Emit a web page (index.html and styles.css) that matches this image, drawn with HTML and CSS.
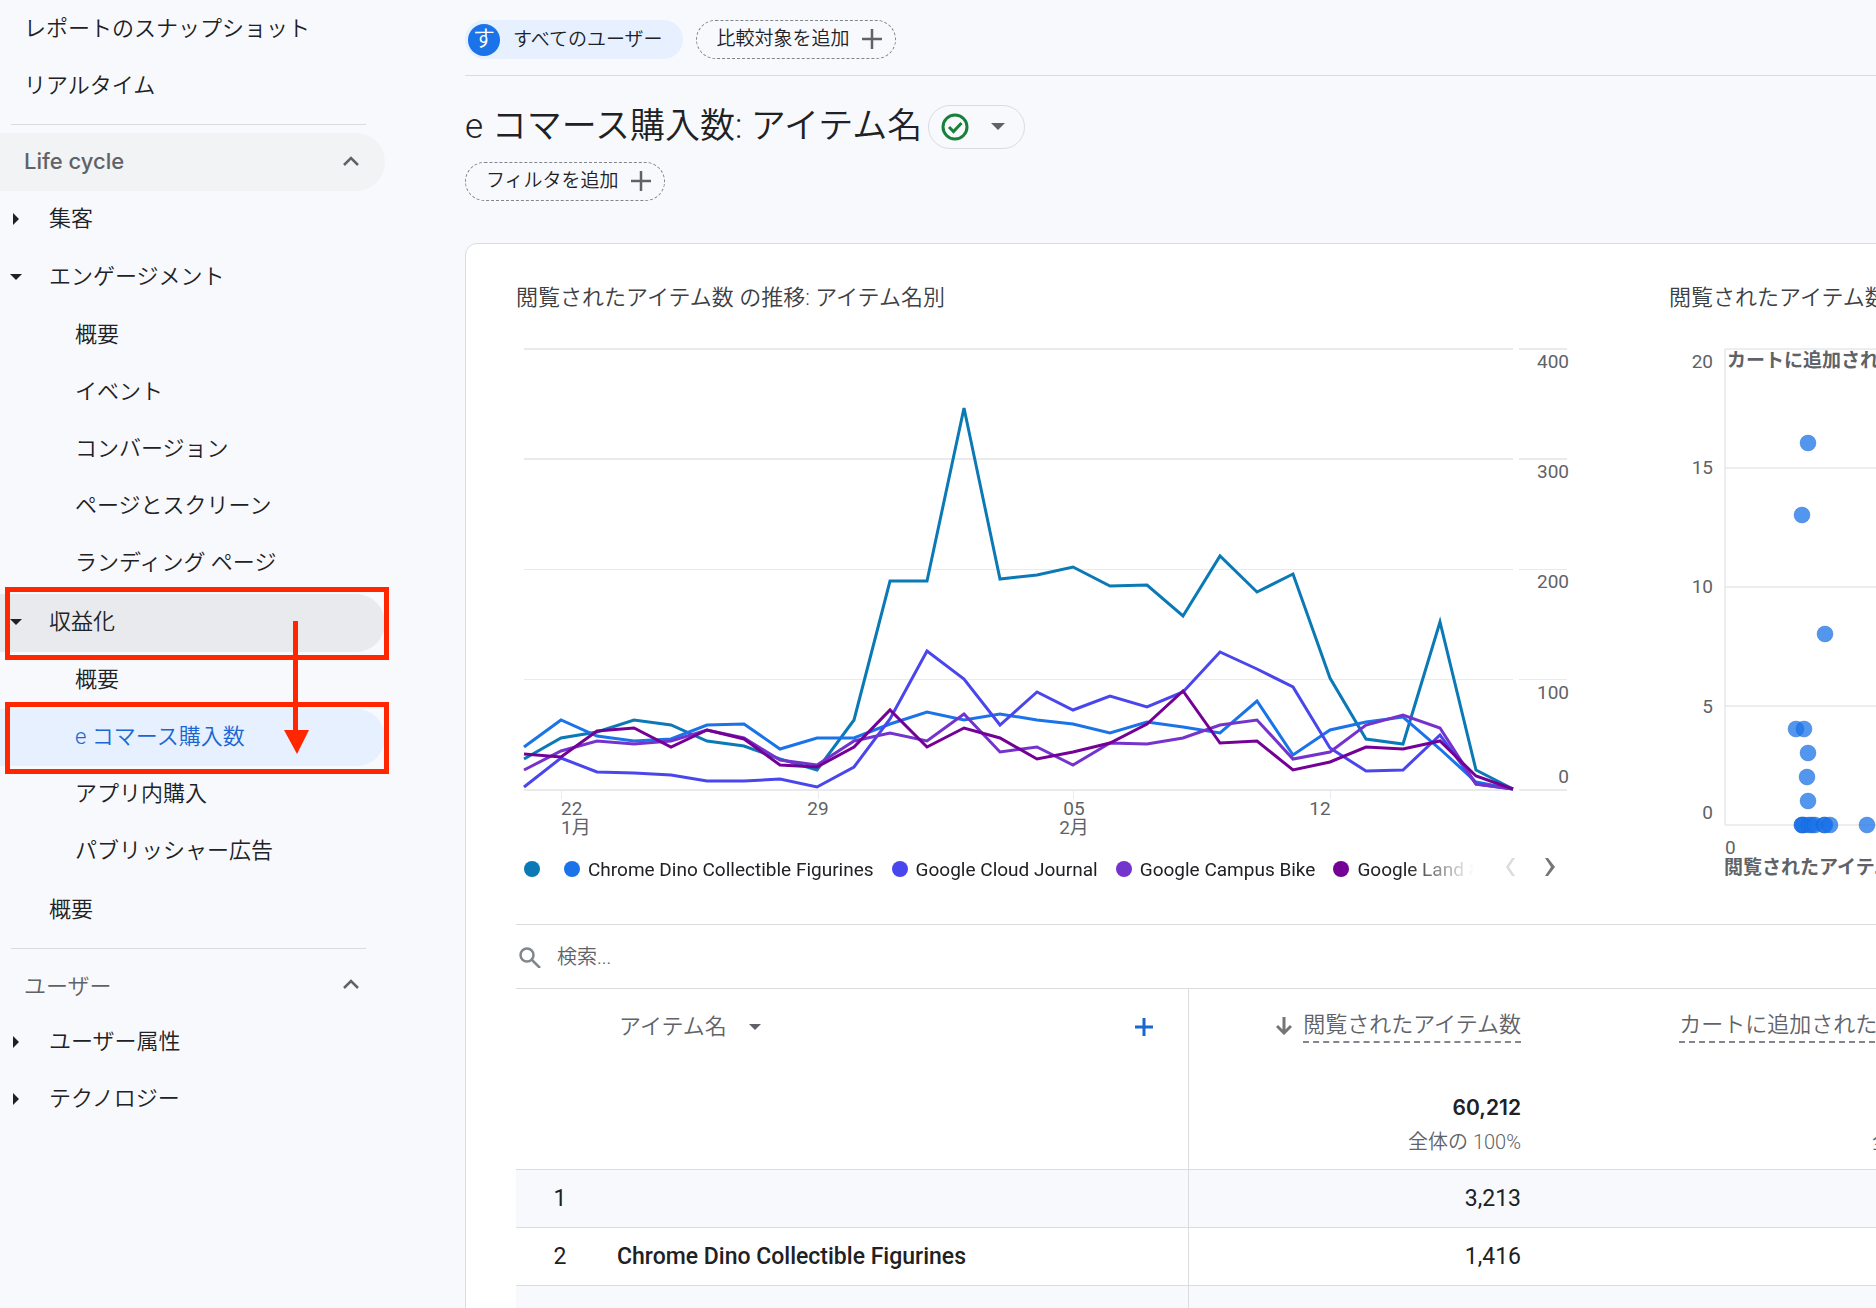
FILE: index.html
```html
<!DOCTYPE html>
<html lang="ja">
<head>
<meta charset="utf-8">
<meta name="viewport" content="width=device-width, initial-scale=1">
<title>e コマース購入数: アイテム名</title>
<link rel="stylesheet" href="styles.css">
</head>
<body>
<div class="app">
  <nav class="sidebar" aria-label="レポート">
    <ul class="menu menu-flat">
      <li><a class="row row-section" href="#snapshot">レポートのスナップショット</a></li>
      <li><a class="row row-section" href="#realtime">リアルタイム</a></li>
    </ul>
    <hr class="rule">
    <ul class="menu menu-tall">
      <li><button class="row row-section row-heading row-hover" type="button" aria-expanded="true"><span class="brand">Life cycle</span>
        <svg class="chevron" width="16" height="10" viewBox="0 0 16 10"><path d="M1 9 8 2l7 7" fill="none" stroke="currentColor" stroke-width="2.5"/></svg></button></li>
      <li><a class="row row-group" href="#acquisition"><svg class="caret" width="12" height="12" viewBox="0 0 12 12"><path d="M3 0v12l6-6z"/></svg>集客</a></li>
      <li><a class="row row-group" href="#engagement"><svg class="caret" width="12" height="12" viewBox="0 0 12 12"><path d="M0 3h12L6 9z"/></svg>エンゲージメント</a>
        <ul class="menu submenu">
          <li><a class="row row-page" href="#engagement-overview">概要</a></li>
          <li><a class="row row-page" href="#events">イベント</a></li>
          <li><a class="row row-page" href="#conversions">コンバージョン</a></li>
          <li><a class="row row-page" href="#pages">ページとスクリーン</a></li>
          <li><a class="row row-page" href="#landing">ランディング ページ</a></li>
        </ul>
      </li>
      <li><a class="row row-group row-open marked" href="#monetization"><svg class="caret" width="12" height="12" viewBox="0 0 12 12"><path d="M0 3h12L6 9z"/></svg>収益化
          <svg class="arrow" width="26" height="134" viewBox="0 0 26 134"><path d="M9 0h5v109h11L13 133 0 109h9z" fill="#ff2600"/></svg></a>
        <ul class="menu submenu">
          <li><a class="row row-page" href="#monetization-overview">概要</a></li>
          <li><a class="row row-page row-current marked" href="#ecommerce" aria-current="page">e コマース購入数</a></li>
          <li><a class="row row-page" href="#in-app">アプリ内購入</a></li>
          <li><a class="row row-page" href="#publisher">パブリッシャー広告</a></li>
        </ul>
      </li>
      <li><a class="row row-group" href="#overview">概要</a></li>
    </ul>
    <hr class="rule">
    <ul class="menu">
      <li><button class="row row-section row-heading" type="button" aria-expanded="true"><span>ユーザー</span>
        <svg class="chevron" width="16" height="10" viewBox="0 0 16 10"><path d="M1 9 8 2l7 7" fill="none" stroke="currentColor" stroke-width="2.5"/></svg></button></li>
      <li><a class="row row-group" href="#attributes"><svg class="caret" width="12" height="12" viewBox="0 0 12 12"><path d="M3 0v12l6-6z"/></svg>ユーザー属性</a></li>
      <li><a class="row row-group" href="#tech"><svg class="caret" width="12" height="12" viewBox="0 0 12 12"><path d="M3 0v12l6-6z"/></svg>テクノロジー</a></li>
    </ul>
  </nav>

  <main class="main">
    <div class="toolbar">
      <button class="chip chip-filled" type="button"><span class="avatar">す</span>すべてのユーザー</button>
      <button class="chip chip-dashed" type="button">比較対象を追加
        <svg width="20" height="20" viewBox="0 0 20 20"><path d="M10 0v20M0 10h20" stroke="#5f6368" stroke-width="2.5"/></svg></button>
    </div>
    <div class="heading">
      <h1>e コマース購入数: アイテム名</h1>
      <button class="status" type="button" aria-label="データ品質">
        <svg width="28" height="28" viewBox="0 0 28 28" fill="none" stroke="#188038" stroke-width="3"><circle cx="14" cy="14" r="12"/><path d="m8 14 4.500 4.500L20.500 10"/></svg>
        <svg width="14" height="8" viewBox="0 0 14 8"><path d="M0 0h14L7 7z" fill="#5f6368"/></svg>
      </button>
    </div>
    <button class="chip chip-dashed chip-filter" type="button">フィルタを追加
      <svg width="20" height="20" viewBox="0 0 20 20"><path d="M10 0v20M0 10h20" stroke="#5f6368" stroke-width="2.5"/></svg></button>

    <section class="card">
      <div class="charts">
        <section>
          <h2>閲覧されたアイテム数 の推移: アイテム名別</h2>
          <svg class="chart" width="1056" height="500" viewBox="0 0 1056 500">
            <g transform="translate(8 10)">
              <path class="grid" d="M0 0H989M995 0h48M0 110H989M995 110h48M0 441H989M995 441h48"/>
              <path class="grid thin" d="M0 220.500H989M995 220.500h48M0 330.500H989M995 330.500h48M37.500 441v9M294.500 441v9M549.500 441v9M806.500 441v9"/>
              <g class="lines">
                <polyline stroke="#0b79b5" points="0,410 37,389 73,383 110,371 147,376 183,392 220,397 256,410 293,421 330,371 366,232 403,232 440,59 476,230 513,226 549,218 586,237 623,236 659,267 696,207 733,243 769,225 806,329 842,390 879,395 916,273 952,421 989,440"/>
                <polyline stroke="#1a73e8" points="0,398 37,371 73,387 110,392 147,390 183,376 220,375 256,400 293,389 330,389 366,375 403,363 440,371 476,365 513,371 549,375 586,384 623,373 659,378 696,384 733,352 769,406 806,381 842,373 879,368 916,400 952,433 989,440"/>
                <polyline stroke="#4a46ed" points="0,438 37,409 73,423 110,424 147,426 183,432 220,432 256,430 293,438 330,418 366,370 403,302 440,330 476,376 513,343 549,361 586,347 623,358 659,343 696,303 733,320 769,338 806,399 842,422 879,421 916,386 952,435 989,440"/>
                <polyline stroke="#7433cc" points="0,421 37,402 73,392 110,395 147,392 183,381 220,389 256,411 293,416 330,392 366,384 403,392 440,365 476,403 513,398 549,416 586,394 623,395 659,389 696,376 733,371 769,410 806,403 842,376 879,366 916,379 952,435 989,440"/>
                <polyline stroke="#740096" points="0,405 37,408 73,382 110,379 147,398 183,381 220,390 256,416 293,418 330,398 366,361 403,398 440,379 476,389 513,410 549,403 586,394 623,375 659,342 696,394 733,392 769,421 806,413 842,398 879,400 916,392 952,427 989,440"/>
              </g>
              <g class="tick" text-anchor="end">
                <text x="1045" y="19">400</text><text x="1045" y="129">300</text><text x="1045" y="239">200</text><text x="1045" y="350">100</text><text x="1045" y="434">0</text>
              </g>
              <g class="tick">
                <text x="37" y="466">22</text><text x="37" y="485">1月</text>
                <text x="294" y="466" text-anchor="middle">29</text>
                <text x="550" y="466" text-anchor="middle">05</text><text x="550" y="485" text-anchor="middle">2月</text>
                <text x="796" y="466" text-anchor="middle">12</text>
              </g>
            </g>
          </svg>
          <div class="legend">
            <ul class="legend-items">
              <li><i class="dot teal"></i></li>
              <li><i class="dot blue"></i>Chrome Dino Collectible Figurines</li>
              <li><i class="dot indigo"></i>Google Cloud Journal</li>
              <li><i class="dot purple"></i>Google Campus Bike</li>
              <li><i class="dot plum"></i>Google Land &amp; Sea</li>
            </ul>
            <button class="pager" type="button" aria-label="前へ" disabled><svg width="12" height="20" viewBox="0 0 12 20"><path d="M8 1h3L5 10l6 9H8L2 10z"/></svg></button>
            <button class="pager" type="button" aria-label="次へ"><svg width="12" height="20" viewBox="0 0 12 20"><path d="M1 1h3l7 9-7 9H1l6-9z"/></svg></button>
          </div>
        </section>
        <section>
          <h2>閲覧されたアイテム数</h2>
          <svg class="chart" width="440" height="545" viewBox="0 0 440 545">
            <g transform="translate(56 10)">
              <path class="axis" d="M384 0H0V476H384M0 119h384M0 238h384M0 357h384"/>
              <g class="points">
                <circle cx="83" cy="94" r="8"/><circle cx="77" cy="166" r="8"/><circle cx="100" cy="285" r="8"/>
                <circle cx="71" cy="380" r="8"/><circle cx="79" cy="380" r="8"/><circle cx="83" cy="404" r="8"/>
                <circle cx="82" cy="428" r="8"/><circle cx="83" cy="452" r="8"/>
                <circle cx="77" cy="476" r="8"/><circle cx="77" cy="476" r="8"/><circle cx="79" cy="476" r="8"/>
                <circle cx="84" cy="476" r="8"/><circle cx="87" cy="476" r="8"/><circle cx="90" cy="476" r="8"/>
                <circle cx="99" cy="476" r="8"/><circle cx="100" cy="476" r="8"/><circle cx="105" cy="476" r="8"/>
                <circle cx="142" cy="476" r="8"/>
              </g>
              <g class="tick" text-anchor="end">
                <text x="-12" y="19">20</text><text x="-12" y="125">15</text><text x="-12" y="244">10</text><text x="-12" y="364">5</text><text x="-12" y="470">0</text>
              </g>
              <g class="tick">
                <text x="0" y="505">0</text>
                <text class="strong" x="2" y="18">カートに追加されたアイテム数</text>
                <text class="strong" x="-1" y="525">閲覧されたアイテム数</text>
              </g>
            </g>
          </svg>
        </section>
      </div>

      <label class="search">
        <svg width="22" height="22" viewBox="0 0 22 22" fill="none" stroke="#80868b" stroke-width="2.500"><circle cx="8" cy="9" r="6.500"/><path d="m13 14 8 8"/></svg>
        <input type="search" placeholder="検索..." aria-label="検索">
      </label>

      <table class="data">
        <colgroup><col class="c-index"><col class="c-name"><col class="c-views"><col class="c-cart"></colgroup>
        <thead>
          <tr class="labels">
            <th class="edge" colspan="2" scope="col">
              <div class="dimension">
                <button class="plain dimension-name" type="button">アイテム名<svg width="12" height="6" viewBox="0 0 12 6"><path d="M0 0h12L6 6z" fill="#5f6368"/></svg></button>
                <button class="plain" type="button" aria-label="ディメンションを追加"><svg width="18" height="18" viewBox="0 0 18 18"><path d="M9 0v18M0 9h18" stroke="#1967d2" stroke-width="3"/></svg></button>
              </div>
            </th>
            <th class="metric" scope="col"><button class="plain" type="button"><svg class="sort" width="16" height="18" viewBox="0 0 16 18"><path d="M8 0v16M1 9l7 7 7-7" fill="none" stroke="#757575" stroke-width="3"/></svg><span class="term">閲覧されたアイテム数</span></button></th>
            <th class="metric" scope="col"><button class="plain" type="button"><span class="term">カートに追加されたアイテム数</span></button></th>
          </tr>
          <tr class="totals">
            <td class="edge" colspan="2"></td>
            <td><strong>60,212</strong><small>全体の 100%</small></td>
            <td><strong></strong><small>全体の 100%</small></td>
          </tr>
        </thead>
        <tbody>
          <tr><td class="index">1</td><th class="edge" scope="row"></th><td>3,213</td><td></td></tr>
          <tr><td class="index">2</td><th class="edge" scope="row">Chrome Dino Collectible Figurines</th><td>1,416</td><td></td></tr>
          <tr><td class="index"></td><th class="edge" scope="row"></th><td></td><td></td></tr>
        </tbody>
      </table>
    </section>
  </main>
</div>
</body>
</html>
```

FILE: styles.css
```css
* { box-sizing: border-box; }

body {
  margin: 0;
  background: #f8f9fc;
  color: #202124;
  font-family: Roboto, "Noto Sans CJK JP", sans-serif;
  font-size: 22px;
}

button, input { font: inherit; color: inherit; }
h1, h2 { margin: 0; font-weight: 350; }
svg { flex: none; display: block; }

.app {
  display: flex;
  height: 100vh;
  overflow: hidden;
}

/* Sidebar */
.sidebar { flex: 0 0 465px; padding-right: 80px; font-weight: 350; }
.menu { list-style: none; margin: 0; padding: 0; }
.menu-flat, .submenu { padding-bottom: 2px; }

.row {
  position: relative;
  display: flex;
  align-items: center;
  width: 100%;
  height: 57px;
  padding: 0 26px 6px 24px;
  border: 0;
  border-radius: 0 29px 29px 0;
  background: none;
  color: #202124;
  text-align: left;
  text-decoration: none;
}
.menu-tall > li > .row { height: 58px; }
.row-heading { justify-content: space-between; padding-bottom: 4px; color: #5f6368; }
.row-hover { padding-bottom: 2px; background: #f1f3f4; }
.row-group { padding-left: 49px; padding-bottom: 8px; }
.row-page { padding-left: 75px; padding-bottom: 8px; }
.row-open { background: #e8eaed; }
.row-current { background: #e6f0ff; color: #1967d2; }
.brand { font-family: Inter, sans-serif; font-size: 22px; font-weight: 500; }
.caret { position: absolute; left: 10px; top: 22px; fill: #202124; }

.marked::after {
  content: "";
  position: absolute;
  inset: -7px -4px -8px 5px;
  border: 5px solid #ff2600;
}
.arrow { position: absolute; left: 284px; top: 27px; z-index: 1; }
.row-open { z-index: 2; }

.rule {
  height: 1px;
  margin: 8px 19px 8px 11px;
  border: 0;
  background: #dadce0;
}

/* Report header */
.main { flex: 1 0 1560px; }
.toolbar {
  display: flex;
  gap: 13px;
  padding: 20px 0 16px;
  border-bottom: 1px solid #dadce0;
}
.chip {
  display: flex;
  align-items: center;
  height: 39px;
  border-radius: 20px;
  font-size: 19px;
  font-weight: 350;
  line-height: 34px;
}
.chip-filled {
  gap: 13px;
  padding: 0 20px 0 3px;
  border: 0;
  background: #e6f0ff;
}
.chip-dashed {
  gap: 12px;
  padding: 0 13px 2px 20px;
  border: 1px dashed #80868b;
  background: none;
}
.avatar {
  width: 32px;
  height: 32px;
  border-radius: 50%;
  background: #1a73e8;
  color: #fff;
  font-size: 22px;
  line-height: 30px;
  text-align: center;
}
.heading {
  display: flex;
  align-items: center;
  gap: 6px;
  padding-top: 29px;
}
h1 { font-size: 35px; line-height: 44px; }
.status {
  display: flex;
  align-items: center;
  gap: 22px;
  height: 44px;
  padding: 0 19px 0 12px;
  border: 1px solid #dadce0;
  border-radius: 22px;
  background: none;
}
.chip-filter { margin: 13px 0 42px; }

/* Card */
.card {
  min-height: 1100px;
  padding: 36px 0 0 50px;
  border: 1px solid #dadce0;
  border-radius: 12px;
  background: #fff;
}
.charts {
  display: grid;
  grid-template-columns: 1056px 440px;
  gap: 97px;
  height: 645px;
  border-bottom: 1px solid #dadce0;
}
h2 { margin-bottom: 23px; color: #3c4043; font-size: 22px; line-height: 36px; }
.chart { margin-bottom: 15px; }
.grid { fill: none; stroke: #e8eaed; stroke-width: 2; }
.thin { stroke-width: 1; }
.axis { fill: none; stroke: #dadce0; stroke-width: 1; }
.lines { fill: none; stroke-width: 3; }
.points { fill: #1a73e8; fill-opacity: .75; stroke: #185abc; stroke-opacity: .3; }
.tick { fill: #5f6368; font-size: 19px; }
.strong { font-weight: 700; }

.legend {
  display: flex;
  align-items: center;
  gap: 28px;
  height: 30px;
  font-size: 19px;
}
.legend-items {
  display: flex;
  flex: 0 0 960px;
  gap: 18px;
  margin: 0;
  padding: 0 0 0 8px;
  overflow: hidden;
  list-style: none;
  white-space: nowrap;
  -webkit-mask-image: linear-gradient(90deg, #000 890px, transparent 958px);
  mask-image: linear-gradient(90deg, #000 890px, transparent 958px);
}
.legend-items li { display: flex; align-items: center; gap: 8px; }
.legend-items li:first-child { padding-right: 6px; }
.dot { width: 16px; height: 16px; border-radius: 50%; }
.teal { background: #0b79b5; }
.blue { background: #1a73e8; }
.indigo { background: #4a46ed; }
.purple { background: #7433cc; }
.plum { background: #740096; }
.pager { width: 12px; padding: 0 0 4px; border: 0; background: none; fill: #757575; }
.pager:disabled { fill: #dadce0; }

.search {
  display: flex;
  align-items: center;
  gap: 14px;
  height: 64px;
  padding-left: 3px;
  border-bottom: 1px solid #dadce0;
}
.search input {
  flex: 1;
  border: 0;
  outline: 0;
  background: none;
  font-size: 20px;
  font-weight: 350;
}
.search input::placeholder { color: #5f6368; opacity: 1; }

/* Table */
.data { width: 1493px; border-spacing: 0; table-layout: fixed; }
.c-index { width: 88px; }
.c-name { width: 585px; }
.c-views { width: 356px; }
.data th, .data td { padding: 0 24px 0 0; text-align: right; }
.data .edge { border-right: 1px solid #dadce0; }
.labels { height: 76px; }
.data thead th { color: #5f6368; font-weight: 350; }
.dimension {
  display: flex;
  align-items: center;
  justify-content: space-between;
  padding: 0 11px 0 103px;
}
.plain {
  display: inline-flex;
  align-items: center;
  padding: 0;
  border: 0;
  background: none;
}
.dimension-name { gap: 22px; line-height: 30px; }
.metric .plain { gap: 11px; }
.data .metric { padding-bottom: 3px; }
.term { border-bottom: 2px dashed #80868b; line-height: 32px; }
.totals { height: 104px; }
.totals td { padding-bottom: 12px; vertical-align: bottom; }
.totals strong {
  display: block;
  font-family: Inter, sans-serif;
  font-size: 21px;
  font-weight: 600;
  line-height: 38px;
}
.totals small {
  display: block;
  color: #5f6368;
  font-size: 20px;
  font-weight: 350;
  line-height: 30px;
}
.data tbody { font-size: 23px; }
.data tbody tr { height: 58px; }
.data tbody tr:nth-child(odd) { background: #f8f9fc; }
.data tbody th, .data tbody td { border-top: 1px solid #dadce0; }
.data tbody .index { padding: 0; text-align: center; }
.data tbody th { padding-left: 13px; font-weight: 500; text-align: left; }
```
